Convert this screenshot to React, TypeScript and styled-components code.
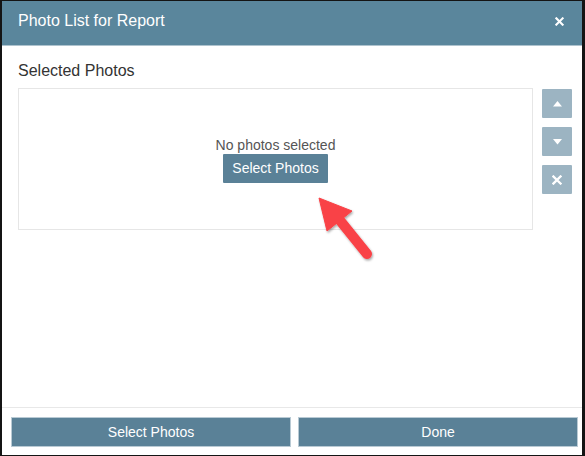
import { ReactElement } from "react"
import styled, { createGlobalStyle } from "styled-components"

const GlobalStyle = createGlobalStyle`
	html, body {
		margin: 0;
		padding: 0;
		background: #111;
	}
	body {
		font-family: "Liberation Sans", Arial, sans-serif;
	}
`

const CloseIcon = ({ size = 9 }: { size?: number }): ReactElement => (
	<svg width={size} height={size} viewBox="0 0 10 10">
		<path d="M1.5 1.5 L8.5 8.5 M8.5 1.5 L1.5 8.5" stroke="#fff" strokeWidth="2.3" strokeLinecap="square" />
	</svg>
)

const TriangleIcon = ({ down = false }: { down?: boolean }): ReactElement => (
	<svg width="9" height="6" viewBox="0 0 9 6">
		<path d={down ? "M0 0 L9 0 L4.5 5.5 Z" : "M0 5.5 L9 5.5 L4.5 0 Z"} fill="#fff" />
	</svg>
)

const Arrow = (): ReactElement => (
	<S.Arrow width="70" height="75" viewBox="0 0 70 75">
		<defs>
			<filter id="sh" x="-20%" y="-20%" width="140%" height="140%">
				<feDropShadow dx="1" dy="1.5" stdDeviation="1.2" floodColor="#000" floodOpacity="0.35" />
			</filter>
		</defs>
		<g filter="url(#sh)">
			<path d="M22 25 L51 61" stroke="#f94246" strokeWidth="10" strokeLinecap="round" />
			<path d="M3 5 L36 18 L11 38 Z" fill="#f94246" strokeLinejoin="round" stroke="#f94246" strokeWidth="1" />
		</g>
	</S.Arrow>
)

const App = (): ReactElement => {
	return (
		<>
			<GlobalStyle />
			<S.Frame>
				<S.Dialog>
					<S.Header>
						<S.Title>Photo List for Report</S.Title>
						<S.CloseButton aria-label="Close">
							<CloseIcon />
						</S.CloseButton>
					</S.Header>
					<S.Body>
						<S.Label>Selected Photos</S.Label>
						<S.ListRow>
							<S.PhotoBox>
								<S.Empty>No photos selected</S.Empty>
								<S.Button>Select Photos</S.Button>
								<Arrow />
							</S.PhotoBox>
							<S.SideTools>
								<S.ToolButton aria-label="Move up">
									<TriangleIcon />
								</S.ToolButton>
								<S.ToolButton aria-label="Move down">
									<TriangleIcon down />
								</S.ToolButton>
								<S.ToolButton aria-label="Remove">
									<CloseIcon size={10} />
								</S.ToolButton>
							</S.SideTools>
						</S.ListRow>
					</S.Body>
					<S.Footer>
						<S.FooterButton>Select Photos</S.FooterButton>
						<S.FooterButton>Done</S.FooterButton>
					</S.Footer>
				</S.Dialog>
			</S.Frame>
		</>
	)
}

export const S = {
	Frame: styled.div`
		width: 585px;
		height: 456px;
		box-sizing: border-box;
		padding: 1px 3px 1px 2px;
		background: #141414;
	`,
	Dialog: styled.div`
		height: 100%;
		display: flex;
		flex-direction: column;
		background: #fff;
	`,
	Header: styled.div`
		height: 44px;
		flex-shrink: 0;
		display: flex;
		align-items: center;
		justify-content: space-between;
		padding: 0 16px 0 16px;
		background: #5a869c;
		border-bottom: 1px solid #aec3ce;
	`,
	Title: styled.div`
		color: #fff;
		font-size: 16px;
		margin-top: -4px;
	`,
	CloseButton: styled.div`
		display: flex;
		align-items: center;
		margin-top: -3px;
		margin-right: 2px;
	`,
	Body: styled.div`
		flex: 1;
		padding: 16px 10px 0 16px;
	`,
	Label: styled.div`
		font-size: 16px;
		color: #333;
		line-height: 18px;
		margin-bottom: 8px;
	`,
	ListRow: styled.div`
		display: flex;
		gap: 9px;
		align-items: flex-start;
	`,
	PhotoBox: styled.div`
		position: relative;
		flex: 1;
		height: 142px;
		box-sizing: border-box;
		border: 1px solid #e6e6e6;
		display: flex;
		flex-direction: column;
		align-items: center;
		justify-content: center;
		padding-top: 2px;
	`,
	Empty: styled.div`
		font-size: 14px;
		color: #555;
		line-height: 16px;
		margin-bottom: 1px;
	`,
	Button: styled.div`
		background: #5a8197;
		color: #fff;
		font-size: 14px;
		height: 29px;
		line-height: 29px;
		padding: 0 9px;
		border-radius: 1px;
	`,
	Arrow: styled.svg`
		position: absolute;
		left: 297px;
		top: 104px;
		overflow: visible;
	`,
	SideTools: styled.div`
		display: flex;
		flex-direction: column;
		gap: 9px;
		padding-top: 1px;
	`,
	ToolButton: styled.div`
		width: 30px;
		height: 29px;
		display: flex;
		align-items: center;
		justify-content: center;
		background: #9cb4c2;
		border-radius: 1px;
	`,
	Footer: styled.div`
		flex-shrink: 0;
		display: flex;
		gap: 7px;
		padding: 9px 4px 8px 9px;
		border-top: 1px solid #e8e8e8;
	`,
	FooterButton: styled.div`
		flex: 1;
		height: 30px;
		box-sizing: border-box;
		display: flex;
		align-items: center;
		justify-content: center;
		background: #5a8197;
		border: 1px solid #b9cad4;
		color: #fff;
		font-size: 14px;
	`,
}

export default App
